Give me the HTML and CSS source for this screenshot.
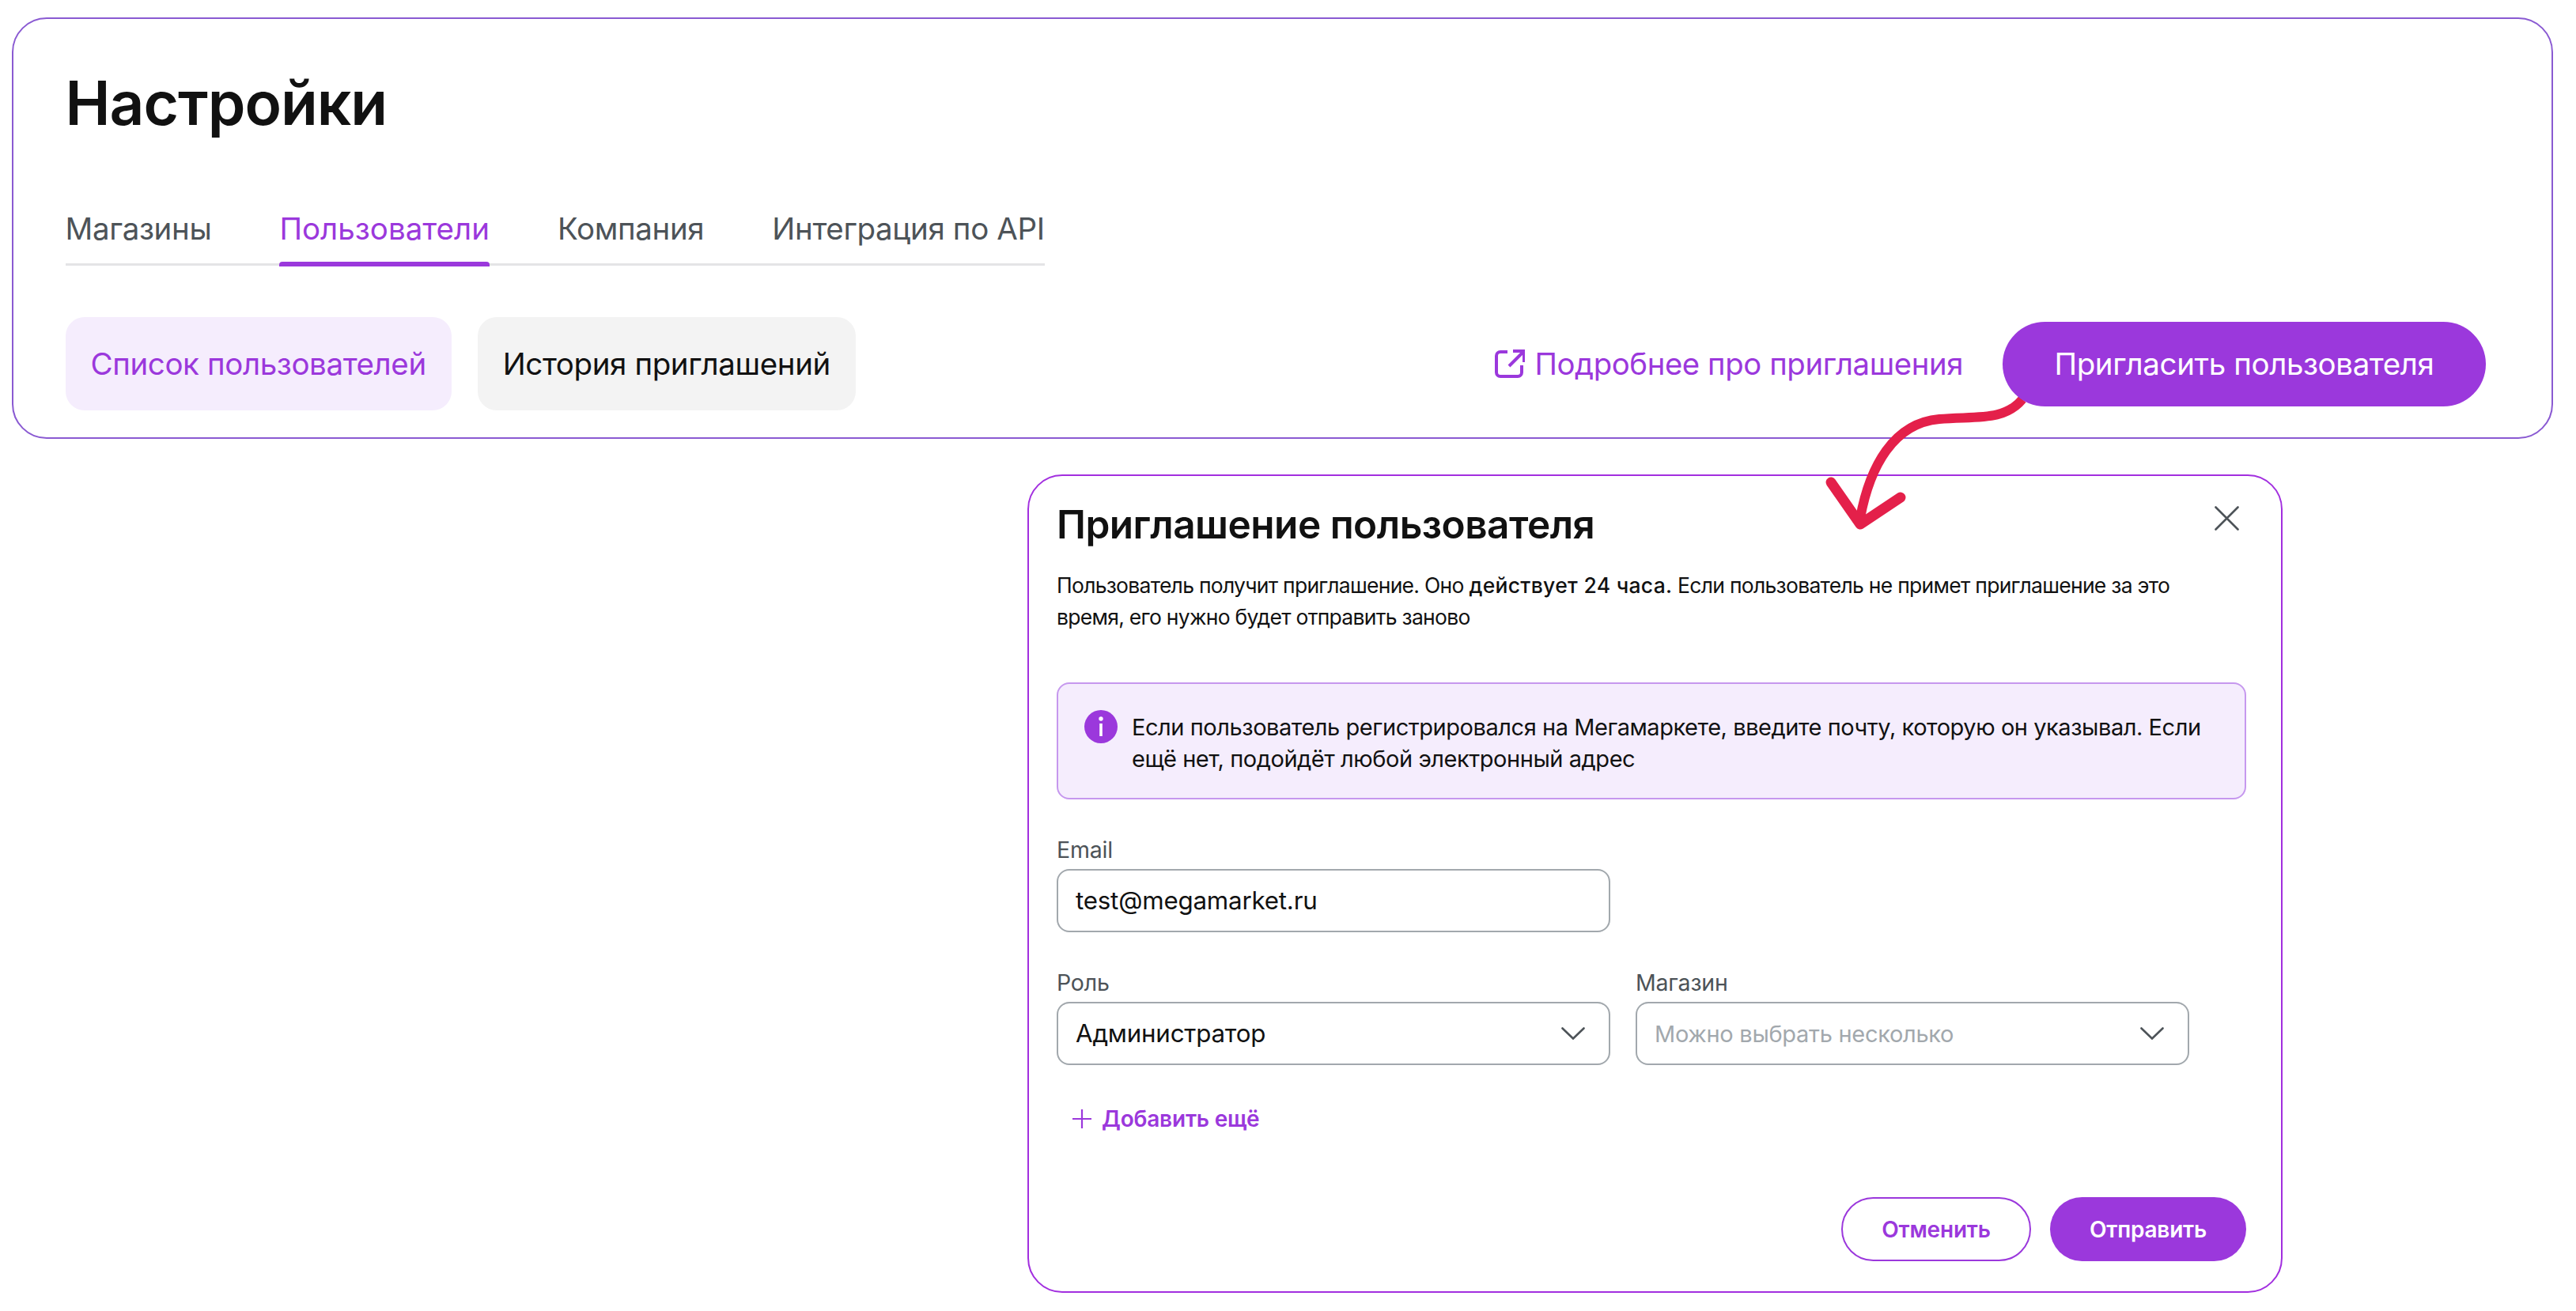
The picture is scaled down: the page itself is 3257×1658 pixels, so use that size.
FILE: index.html
```html
<!DOCTYPE html>
<html lang="ru">
<head>
<meta charset="utf-8">
<title>Настройки</title>
<link rel="stylesheet" href="styles.css">
</head>
<body>
<section class="settings">
  <h1 class="title">Настройки</h1>
  <nav class="tabs">
    <a class="tab">Магазины</a>
    <a class="tab tab-active">Пользователи</a>
    <a class="tab">Компания</a>
    <a class="tab">Интеграция по API</a>
  </nav>
  <div class="toolbar">
    <a class="seg seg-active">Список пользователей</a>
    <a class="seg">История приглашений</a>
    <a class="more">
      <svg class="more-icon" viewBox="0 0 38 36" fill="none"><path d="M16 3H7a5 5 0 0 0-5 5v21a5 5 0 0 0 5 5h22a5 5 0 0 0 5-5v-9" stroke="currentColor" stroke-width="4"/><path d="M23 2h14v14M36 3 18 21" stroke="currentColor" stroke-width="4"/></svg>
      Подробнее про приглашения
    </a>
    <a class="invite">Пригласить пользователя</a>
  </div>
</section>

<section class="modal">
  <header class="modal-head">
    <h2 class="modal-title">Приглашение пользователя</h2>
    <svg class="close" viewBox="0 0 32 32" fill="none"><path d="M1.500 1.500l28 28M29.500 1.500l-28 28" stroke="#4d5358" stroke-width="2.600" stroke-linecap="round"/></svg>
  </header>
  <p class="lead">Пользователь получит приглашение. Оно <b class="strong">действует 24 часа.</b> Если пользователь не примет приглашение за это<br>время, его нужно будет отправить заново</p>
  <div class="notice">
    <svg class="info" viewBox="0 0 42 42"><circle cx="21" cy="21" r="21" fill="#9b38dc"/><rect x="19.200" y="17" width="3.600" height="16" fill="#fff"/><circle cx="21" cy="11" r="2.700" fill="#fff"/></svg>
    <p class="notice-text">Если пользователь регистрировался на Мегамаркете, введите почту, которую он указывал. Если ещё нет, подойдёт любой электронный адрес</p>
  </div>
  <div class="row row-email">
    <div class="field">
      <span class="label">Email</span>
      <div class="input">test@megamarket.ru</div>
    </div>
  </div>
  <div class="row">
    <div class="field">
      <span class="label">Роль</span>
      <div class="input">Администратор
        <svg class="chev" viewBox="0 0 30 16" fill="none"><path d="M1.500 1.500 15 14.500 28.500 1.500" stroke="#4d5358" stroke-width="2.600" stroke-linecap="round"/></svg>
      </div>
    </div>
    <div class="field">
      <span class="label">Магазин</span>
      <div class="input input-placeholder">Можно выбрать несколько
        <svg class="chev" viewBox="0 0 30 16" fill="none"><path d="M1.500 1.500 15 14.500 28.500 1.500" stroke="#4d5358" stroke-width="2.600" stroke-linecap="round"/></svg>
      </div>
    </div>
  </div>
  <a class="add">
    <svg class="plus" viewBox="0 0 24 24" fill="none"><path d="M12 0v24M0 12h24" stroke="currentColor" stroke-width="2.200"/></svg>
    Добавить ещё
  </a>
  <footer class="actions">
    <a class="btn btn-ghost">Отменить</a>
    <a class="btn btn-solid">Отправить</a>
  </footer>
</section>

<svg class="arrow" viewBox="0 0 300 200" fill="none">
  <path d="M255 20C232 48 196 41 150 45C92 50 62 105 50 170" stroke="#e4204a" stroke-width="12"/>
  <path d="M13 125L50 178L101 144" stroke="#e4204a" stroke-width="13" stroke-linecap="round" stroke-linejoin="round"/>
</svg>
</body>
</html>
```

FILE: styles.css
```css
* { box-sizing: border-box; }
html, body { margin: 0; padding: 0; background: #fff; }
body {
  position: relative;
  width: 3257px;
  height: 1658px;
  overflow: hidden;
  padding: 22px 29px 0 15px;
  font-family: Inter, "Noto Sans", sans-serif;
  color: #111;
}
p, h1, h2 { margin: 0; }

.settings {
  height: 533px;
  border: 2px solid #8a5ad2;
  border-radius: 44px;
  padding: 64px 66px 0 65.500px;
}
.title {
  font-size: 76.500px;
  line-height: 84px;
  font-weight: 600;
  letter-spacing: -1px;
  color: #111;
}
.tabs {
  display: inline-flex;
  gap: 86px;
  margin-top: 94px;
  border-bottom: 3px solid #e4e4e6;
  height: 70px;
}
.tab {
  position: relative;
  font-size: 38.500px;
  line-height: 46px;
  color: #4d5358;
  height: 70px;
  letter-spacing: -0.35px;
}
.tab-active { color: #9b38dc; letter-spacing: 0; }
.tab-active::after {
  content: "";
  position: absolute;
  left: 0;
  right: 0;
  bottom: -1px;
  height: 6px;
  border-radius: 4px 4px 0 0;
  background: #9b38dc;
}
.toolbar {
  display: flex;
  align-items: center;
  margin-top: 65px;
  margin-right: 17px;
}
.seg {
  display: flex;
  align-items: center;
  height: 118px;
  padding: 0 32px;
  border-radius: 24px;
  background: #f3f3f3;
  font-size: 38.500px;
  color: #111;
  margin-right: 33px;
  letter-spacing: -0.4px;
}
.seg-active { background: #f5edfd; color: #9b38dc; }
.more {
  display: flex;
  align-items: center;
  gap: 12px;
  margin-left: auto;
  font-size: 38.300px;
  color: #9b38dc;
  letter-spacing: -0.4px;
}
.more-icon { width: 38px; height: 36px; flex: none; }
.invite {
  position: relative;
  z-index: 2;
  display: flex;
  align-items: center;
  justify-content: center;
  width: 611px;
  height: 107px;
  margin-left: 50px;
  border-radius: 54px;
  background: #9b38dc;
  color: #fff;
  font-size: 38.500px;
  letter-spacing: -0.4px;
}

.modal {
  width: 1587px;
  height: 1035px;
  margin: 45px 0 0 1284px;
  border: 2px solid #a22fdf;
  border-radius: 44px;
  padding: 32px 44px 0 35px;
}
.modal-head {
  display: flex;
  justify-content: space-between;
  align-items: flex-start;
}
.modal-title {
  font-size: 49.500px;
  line-height: 58px;
  font-weight: 600;
  letter-spacing: -0.5px;
  color: #111;
}
.close { width: 32px; height: 32px; margin: 6px 0 0; flex: none; position: relative; right: 8px; }
.lead {
  width: 1460px;
  margin-top: 28px;
  font-size: 26.500px;
  line-height: 40px;
  color: #111;
  letter-spacing: -0.72px;
}
.strong { font-weight: 500; letter-spacing: 0.3px; }
.notice {
  display: flex;
  gap: 18px;
  width: 1504px;
  height: 148px;
  margin-top: 63px;
  padding: 35px 33px 0;
  background: #f5edfd;
  border: 2px solid #c698ee;
  border-radius: 16px;
}
.info { width: 42px; height: 42px; flex: none; margin-top: -2px; }
.notice-text {
  font-size: 29px;
  line-height: 40px;
  color: #111;
  letter-spacing: -0.45px;
}
.row {
  display: flex;
  gap: 32px;
  margin-top: 46px;
}
.field { display: flex; flex-direction: column; width: 700px; }
.label {
  font-size: 28.500px;
  line-height: 36px;
  color: #4d5358;
  margin-bottom: 6px;
  letter-spacing: -0.2px;
}
.input {
  display: flex;
  align-items: center;
  justify-content: space-between;
  height: 80px;
  padding: 0 30px 0 22px;
  border: 2px solid #a2a8ad;
  border-radius: 16px;
  font-size: 31.300px;
  color: #111;
  letter-spacing: -0.2px;
}
.input-placeholder { color: #a2a8ad; font-size: 29px; letter-spacing: -0.3px; }
.chev { width: 30px; height: 16px; flex: none; }
.add {
  display: inline-flex;
  align-items: center;
  gap: 13px;
  margin: 51px 0 0 20px;
  font-size: 28px;
  font-weight: 600;
  color: #9b38dc;
  letter-spacing: -0.2px;
}
.plus { width: 24px; height: 24px; flex: none; }
.actions {
  display: flex;
  justify-content: flex-end;
  gap: 24px;
  margin-top: 82px;
}
.btn {
  display: flex;
  align-items: center;
  justify-content: center;
  height: 81px;
  border-radius: 41px;
  font-size: 28px;
  font-weight: 600;
  letter-spacing: -0.2px;
}
.btn-ghost { width: 240px; border: 2px solid #9b38dc; color: #9b38dc; }
.btn-solid { width: 248px; background: #9b38dc; color: #fff; }

.arrow {
  position: absolute;
  left: 2302px;
  top: 485px;
  width: 300px;
  height: 200px;
  z-index: 1;
}
```
